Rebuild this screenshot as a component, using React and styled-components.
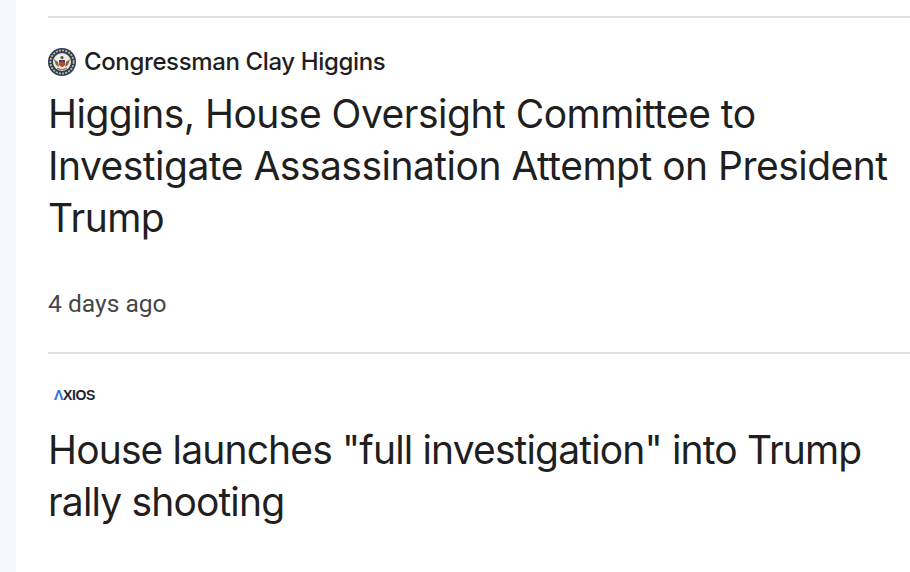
import React from "react";
import styled, { createGlobalStyle } from "styled-components";

const Global = createGlobalStyle`
html, body {
  margin: 0;
  padding: 0;
  background: #fff;
}
`;

const Page = styled.div`
  display: flex;
  width: 910px;
  height: 572px;
  overflow: hidden;
  background: #fff;
`;

const Rail = styled.div`
  width: 16px;
  flex-shrink: 0;
  background: #f6f8fd;
`;

const Feed = styled.div`
  flex: 1;
  padding: 16px 0 0 32px;
`;

const Article = styled.div`
  border-top: 2px solid #e3e3e3;
  height: ${(p) => p.$height}px;
`;

const Source = styled.div`
  display: flex;
  align-items: center;
  gap: 8px;
  height: 28px;
  margin-top: 30px;
`;

const LogoSource = styled(Source)`
  margin-top: 27px;
  padding-left: 6px;
`;

const SourceName = styled.span`
  font-family: Inter, "Liberation Sans", sans-serif;
  font-size: 24px;
  font-weight: 450;
  line-height: 28px;
  letter-spacing: -0.37px;
  color: #1f1f1f;
`;

const AxiosWord = styled.span`
  font-family: "Liberation Sans", Arial, sans-serif;
  font-size: 14px;
  font-weight: 700;
  letter-spacing: -0.35px;
  color: #1f2430;
`;

const AxiosA = styled.span`
  color: #2a6fe0;
`;

const Title = styled.div`
  font-family: Inter, "Liberation Sans", sans-serif;
  font-size: 39px;
  line-height: 52px;
  letter-spacing: ${(p) => p.$tracking}px;
  color: #1f1f1f;
  width: 850px;
  margin-top: ${(p) => p.$top}px;
`;

const Age = styled.div`
  font-family: Roboto, "Liberation Sans", sans-serif;
  font-size: 24.6px;
  line-height: 28px;
  color: #474747;
  margin-top: 46px;
`;

const Seal = () => (
  <svg width="28" height="28" viewBox="0 0 28 28">
    <circle cx="14" cy="14" r="14" fill="#2b3d5c" />
    <circle cx="14" cy="14" r="11.6" fill="none" stroke="#c4b483" strokeWidth="1.8" strokeDasharray="2 1.2" />
    <circle cx="14" cy="14" r="9" fill="#f0eee2" />
    <path d="M5.8 11 L10 14 L11 19 L8 17 Z M22.2 11 L18 14 L17 19 L20 17 Z" fill="#7d6a3a" />
    <path d="M11 12 H17 V17 Q14 21 11 17 Z" fill="#b8433f" />
    <rect x="11" y="12" width="6" height="2" fill="#2f4a7a" />
    <circle cx="14" cy="9.5" r="1.6" fill="#5a5136" />
    <path d="M9 20 Q14 23 19 20" fill="none" stroke="#6d7a4a" strokeWidth="1.2" />
  </svg>
);

export default function App() {
  return (
    <Page>
      <Global />
      <Rail />
      <Feed>
        <Article $height={334}>
          <Source>
            <Seal />
            <SourceName>Congressman Clay Higgins</SourceName>
          </Source>
          <Title $top={12} $tracking={-0.51}>
            Higgins, House Oversight Committee to Investigate Assassination Attempt on President Trump
          </Title>
          <Age>4 days ago</Age>
        </Article>
        <Article $height={200}>
          <LogoSource>
            <AxiosWord>
              <AxiosA>Λ</AxiosA>XIOS
            </AxiosWord>
          </LogoSource>
          <Title $top={15} $tracking={-0.85}>
            House launches "full investigation" into Trump rally shooting
          </Title>
        </Article>
      </Feed>
    </Page>
  );
}
